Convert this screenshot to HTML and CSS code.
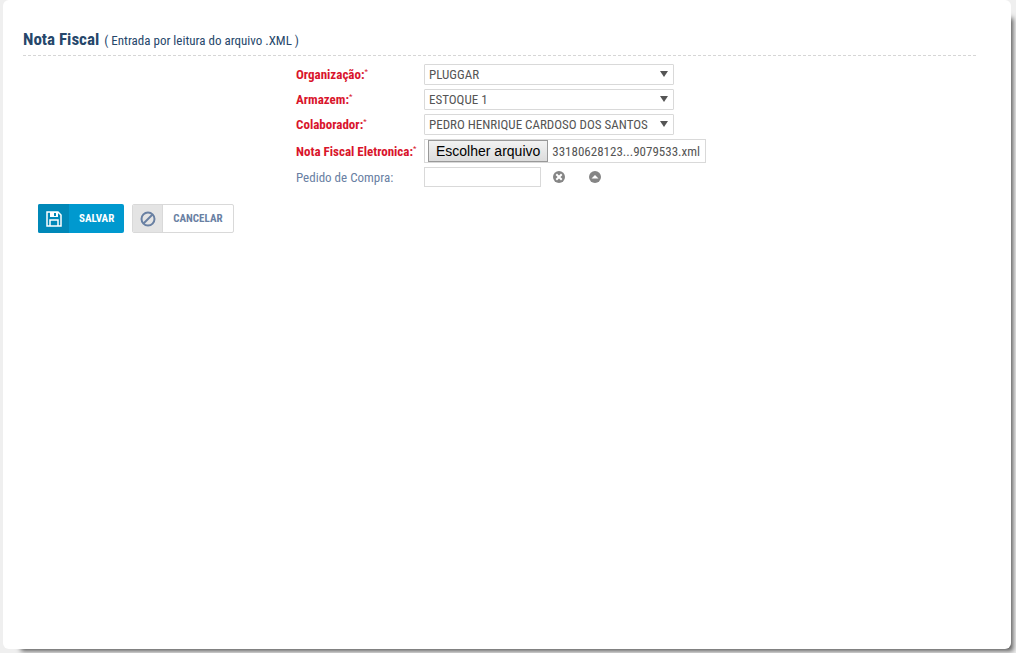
FILE: index.html
```html
<!DOCTYPE html>
<html lang="pt-BR">
<head>
  <meta charset="UTF-8">
  <meta name="viewport" content="width=device-width, initial-scale=1.0">
  <title>Nota Fiscal</title>
  <link rel="stylesheet" href="styles.css">
</head>
<body>
  <main class="panel">
    <header class="panel-header">
      <h1>Nota Fiscal</h1>
      <span class="subtitle">( Entrada por leitura do arquivo .XML )</span>
    </header>

    <form id="notaForm">
      <div class="fields">
        <label class="required" for="organizacao">Organização:<sup>*</sup></label>
        <div class="select">
          <select id="organizacao" name="organizacao">
            <option>PLUGGAR</option>
          </select>
        </div>

        <label class="required" for="armazem">Armazem:<sup>*</sup></label>
        <div class="select">
          <select id="armazem" name="armazem">
            <option>ESTOQUE 1</option>
          </select>
        </div>

        <label class="required" for="colaborador">Colaborador:<sup>*</sup></label>
        <div class="select">
          <select id="colaborador" name="colaborador">
            <option>PEDRO HENRIQUE CARDOSO DOS SANTOS</option>
          </select>
        </div>

        <label class="required" for="arquivo">Nota Fiscal Eletronica:<sup>*</sup></label>
        <div class="file">
          <input type="file" id="arquivo" name="arquivo" accept=".xml">
          <label class="file-button" for="arquivo">Escolher arquivo</label>
          <span class="file-name">33180628123...9079533.xml</span>
        </div>

        <label for="pedido">Pedido de Compra:</label>
        <div class="lookup">
          <input type="text" id="pedido" name="pedido">
          <button type="button" class="icon-button" aria-label="Limpar">
            <svg width="12" height="12" viewBox="0 0 12 12">
              <circle cx="6" cy="6" r="6" fill="#858585"/>
              <path d="M4 4l4 4M8 4l-4 4" stroke="#fff" stroke-width="2" stroke-linecap="square"/>
            </svg>
          </button>
          <button type="button" class="icon-button" aria-label="Pesquisar">
            <svg width="12" height="12" viewBox="0 0 12 12">
              <circle cx="6" cy="6" r="6" fill="#858585"/>
              <path d="M2.500 7.500L6 4l3.500 3.500z" fill="#fff"/>
            </svg>
          </button>
        </div>
      </div>

      <div class="actions">
        <button type="submit" class="btn btn-save">
          <span class="btn-icon">
            <svg width="16" height="16" viewBox="0 0 16 16">
              <path d="M1 1h11l3 3v11H1z" fill="none" stroke="#fff" stroke-width="1.500"/>
              <path d="M4 1h8v5H4z" fill="#fff"/>
              <path d="M8 2h2v3H8z" fill="#0088b8"/>
              <path d="M4 15V9h8v6" fill="none" stroke="#fff" stroke-width="1.500"/>
            </svg>
          </span>
          <span class="btn-text">SALVAR</span>
        </button>
        <button type="button" class="btn btn-cancel">
          <span class="btn-icon">
            <svg width="16" height="16" viewBox="0 0 16 16" fill="none" stroke="#6980a3" stroke-width="2">
              <circle cx="8" cy="8" r="6.500"/>
              <path d="M3.500 12.500l9-9"/>
            </svg>
          </span>
          <span class="btn-text">CANCELAR</span>
        </button>
      </div>
    </form>
  </main>
</body>
</html>
```
FILE: styles.css
```css
* {
  box-sizing: border-box;
}
body {
  display: flex;
  min-height: 100vh;
  margin: 0;
  padding: 0 5px 4px 3px;
  background: #efefef;
  font-family: "Roboto Condensed", "Liberation Sans Narrow", "Arial Narrow", Roboto, sans-serif;
  font-size: 13px;
  color: #555;
}
.panel {
  flex: 1;
  padding: 27px 35px 20px 20px;
  background: #fff;
  border-radius: 6px;
  box-shadow: 10px 10px 5px -8px #555;
}
.panel-header {
  display: flex;
  align-items: baseline;
  gap: 5px;
  height: 29px;
  border-bottom: 1px dashed #d6d6d6;
  color: #26476b;
}
h1 {
  margin: 0;
  font-size: 17px;
  line-height: 24px;
}
.fields {
  display: grid;
  grid-template-columns: 128px 282px;
  justify-content: center;
  align-items: center;
  row-gap: 4px;
  padding: 8px 0 0 3px;
}
.fields label {
  color: #6980a3;
  white-space: nowrap;
}
.fields .required {
  color: #d9152c;
  font-weight: bold;
}
sup {
  font-size: 8px;
  line-height: 0;
  font-weight: normal;
}
.select {
  position: relative;
  width: 250px;
  height: 21px;
}
.select::after {
  content: "";
  position: absolute;
  top: 7px;
  right: 6px;
  border: 4px solid transparent;
  border-top: 6px solid #555;
  border-bottom: 0;
  pointer-events: none;
}
select {
  appearance: none;
  width: 100%;
  height: 21px;
  padding: 0 4px;
  border: 1px solid #d9d9d9;
  border-radius: 1px;
  background: #fff;
  font: inherit;
  color: inherit;
}
.file {
  display: flex;
  align-items: center;
  gap: 4px;
  height: 24px;
  padding: 0 3px;
  border: 1px solid #d9d9d9;
  white-space: nowrap;
}
.file input {
  position: absolute;
  width: 1px;
  height: 1px;
  opacity: 0;
}
.fields .file-button {
  padding: 0 7px;
  border: 1px solid #999;
  background: linear-gradient(#f2f2f2, #dcdcdc);
  font-family: "Liberation Sans", Arial, sans-serif;
  font-size: 14px;
  line-height: 20px;
  color: #000;
}
.lookup {
  display: flex;
  align-items: center;
}
.lookup input {
  width: 117px;
  height: 20px;
  padding: 0 4px;
  border: 1px solid #d9d9d9;
  font: inherit;
}
.icon-button {
  display: flex;
  margin: 0 12px;
  padding: 0;
  border: 0;
  background: none;
  cursor: pointer;
}
.actions {
  display: flex;
  gap: 8px;
  padding: 17px 15px;
}
.btn {
  display: flex;
  height: 29px;
  padding: 0;
  border: 0;
  border-radius: 2px;
  overflow: hidden;
  font: bold 11px "Roboto Condensed", "Liberation Sans Narrow", "Arial Narrow", Roboto, sans-serif;
  cursor: pointer;
}
.btn-icon {
  display: flex;
  align-items: center;
  justify-content: center;
  align-self: stretch;
  width: 31px;
}
.btn-text {
  align-self: center;
  padding: 0 10px;
}
.btn-save {
  background: #0099cf;
  color: #fff;
}
.btn-save .btn-icon {
  background: #0088b8;
}
.btn-cancel {
  border: 1px solid #d9d9d9;
  background: #fff;
  color: #6980a3;
}
.btn-cancel .btn-icon {
  width: 30px;
  border-right: 1px solid #d9d9d9;
  background: #e4e4e4;
}
```
